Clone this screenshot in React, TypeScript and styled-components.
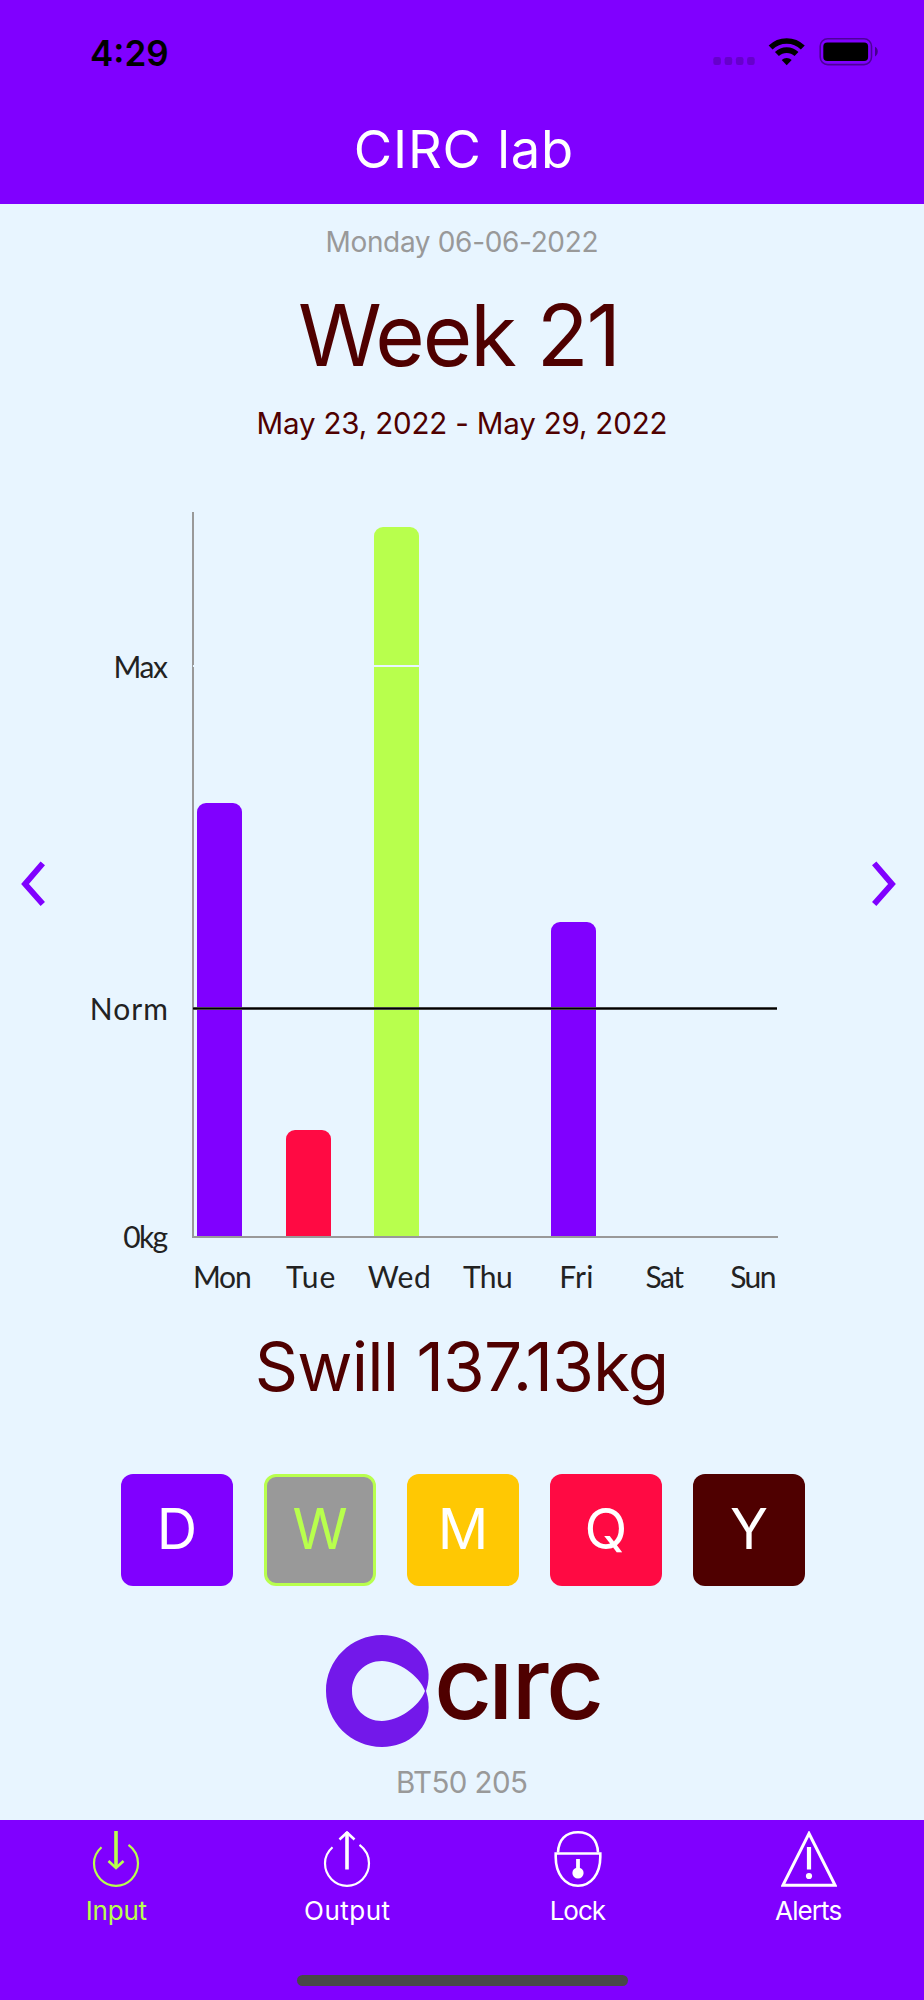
import React from 'react';
import styled, { createGlobalStyle, css } from 'styled-components';

const color = {
  violet: '#8000ff',
  sky: '#e8f5ff',
  maroon: '#4f0000',
  lime: '#b8ff4d',
  red: '#ff0a43',
  amber: '#ffc803',
  gray: '#999999',
  ink: '#222222',
};

const GlobalStyle = createGlobalStyle`
  *, *::before, *::after { box-sizing: border-box; }
  body { margin: 0; background: ${color.violet}; }
  button { border: 0; padding: 0; background: none; font: inherit; color: inherit; }
`;

/* Letter spacing whose trailing gap is taken back, so centred text stays centred. */
const tracked = css<{ $track?: number }>`
  letter-spacing: ${({ $track = 0 }) => $track}px;
  margin-right: ${({ $track = 0 }) => -$track}px;
`;

const Screen = styled.div`
  width: 924px;
  height: 2000px;
  display: flex;
  flex-direction: column;
  background: ${color.sky};
  font-family: Inter, 'Liberation Sans', sans-serif;
  overflow: hidden;
`;

const Header = styled.header`
  height: 204px;
  flex: none;
  background: ${color.violet};
`;

const StatusBar = styled.div`
  height: 104px;
  display: flex;
  align-items: center;
  justify-content: space-between;
  padding: 0 46px 0 90px;
`;

const Clock = styled.span`
  padding-top: 1px;
  font-size: 35px;
  font-weight: 600;
  line-height: 40px;
  color: #000;
  ${tracked}
`;

const Title = styled.h1`
  margin: 0;
  height: 91px;
  line-height: 91px;
  padding-left: 3px;
  font-size: 52.5px;
  font-weight: 400;
  text-align: center;
  color: #fff;
`;

const Tracked = styled.span<{ $track?: number }>`
  display: inline-block;
  white-space: nowrap;
  ${tracked}
`;

const Main = styled.main`
  height: 1616px;
  flex: none;
  display: flex;
  flex-direction: column;
  align-items: center;
  text-align: center;
`;

const Today = styled.p`
  margin: 18px 0 0;
  font-size: 28px;
  line-height: 40px;
  color: ${color.gray};
`;

const WeekTitle = styled.h2`
  margin: 24px 0 0;
  padding-right: 5px;
  font-size: 85px;
  font-weight: 400;
  line-height: 100px;
  color: ${color.maroon};
`;

const Range = styled.p`
  margin: 17px 0 0;
  font-size: 29.5px;
  line-height: 40px;
  color: ${color.maroon};
`;

const Carousel = styled.section`
  margin-top: 69px;
  width: 100%;
  display: grid;
  grid-template-columns: 65px 103px 24px 586px 1fr 65px;
  grid-template-rows: 744px 40px;
  font-family: Lato, 'Open Sans', sans-serif;
`;

const Arrow = styled.button<{ $side: 'left' | 'right' }>`
  grid-row: 1;
  grid-column: ${({ $side }) => ($side === 'left' ? 1 : 6)};
  padding-right: ${({ $side }) => ($side === 'left' ? 0 : 16)}px;
  display: grid;
  place-items: center;
  svg { display: block; transform: ${({ $side }) => ($side === 'left' ? 'none' : 'scaleX(-1)')}; }
`;

const AxisLabels = styled.div`
  grid-row: 1;
  grid-column: 2;
  padding-top: 134px;
  display: flex;
  flex-direction: column;
  align-items: flex-end;
`;

const AxisLabel = styled.span<{ $gap: number; $track: number }>`
  margin-bottom: ${({ $gap }) => $gap}px;
  font-size: 30px;
  line-height: 40px;
  color: ${color.ink};
  ${tracked}
`;

const Plot = styled.div`
  grid-row: 1;
  grid-column: 4;
  position: relative;
  height: 726px;
  display: flex;
  align-items: flex-end;
  gap: 43.5px;
  padding-left: 3px;
  border-left: 2px solid ${color.gray};
  border-bottom: 2px solid ${color.gray};
`;

const Bar = styled.div<{ $fill: string }>`
  flex: none;
  width: 45px;
  border-radius: 9px 9px 0 0;
  background: ${({ $fill }) => $fill};
`;

const RefLine = styled.div<{ $top: number; $size: number; $fill: string }>`
  position: absolute;
  left: -1px;
  right: 1px;
  top: ${({ $top }) => $top}px;
  height: ${({ $size }) => $size}px;
  background: ${({ $fill }) => $fill};
`;

const Days = styled.div`
  grid-row: 2;
  grid-column: 3 / 6;
  margin-left: 10px;
  display: grid;
  grid-template-columns: repeat(7, 88.5px);
  font-size: 30px;
  line-height: 40px;
  color: ${color.ink};
`;

const Total = styled.p`
  margin: 31px 0 0;
  font-size: 67.5px;
  line-height: 80px;
  color: ${color.maroon};
`;

const Periods = styled.div`
  margin-top: 67px;
  padding-left: 2px;
  display: flex;
  gap: 31px;
`;

const Period = styled.button<{ $fill: string; $active?: boolean }>`
  width: 112px;
  height: 112px;
  border-radius: 12px;
  border: ${({ $active }) => ($active ? 3 : 0)}px solid ${color.lime};
  background: ${({ $fill }) => $fill};
  color: ${({ $active }) => ($active ? color.lime : '#fff')};
  display: grid;
  place-items: center;
  font-size: 56px;
  line-height: 68px;
  padding-bottom: 2px;
`;

const Logo = styled.svg`
  display: block;
  margin: 49px 0 0 2px;
  overflow: visible;
`;

const Serial = styled.p`
  margin: 15px 0 0;
  font-size: 29.5px;
  line-height: 40px;
  color: ${color.gray};
`;

const Footer = styled.footer`
  flex: 1;
  display: flex;
  flex-direction: column;
  align-items: center;
  background: ${color.violet};
`;

const Tabs = styled.nav`
  width: 100%;
  height: 155px;
  display: grid;
  grid-template-columns: repeat(4, 1fr);
  padding: 11px 0 0 1px;
`;

const Tab = styled.button<{ $active?: boolean }>`
  display: flex;
  flex-direction: column;
  align-items: center;
  gap: 6px;
  font-size: 26px;
  line-height: 36px;
  color: ${({ $active }) => ($active ? color.lime : '#fff')};
`;

const HomeIndicator = styled.div`
  width: 331px;
  height: 11px;
  border-radius: 6px;
  background: #484848;
`;

const StatusIcons = () => (
  <svg width="166" height="30" viewBox="712 37 166 30">
    {[713.3, 724.6, 735.9, 747.1].map((x) => (
      <rect key={x} x={x} y="57" width="7.6" height="8" rx="2.2" fill="#000" opacity=".2" />
    ))}
    <g fill="none" stroke="#000" strokeWidth="5.6">
      <path d="M770.6 47.6a23 23 0 0 1 32.2 0" />
      <path d="M776.9 54.1a14 14 0 0 1 19.6 0" />
    </g>
    <path d="M786.7 65.2l-5-5.2a7.2 7.2 0 0 1 10 0z" fill="#000" />
    <rect x="820.2" y="38.8" width="51.3" height="25.8" rx="7.5" fill="none" stroke="#000" strokeOpacity=".4" strokeWidth="1.6" />
    <rect x="823.3" y="42.6" width="44.8" height="18.4" rx="4" fill="#000" />
    <path d="M875 46.8c3.7 1.6 3.7 8 0 9.6z" fill="#000" opacity=".45" />
  </svg>
);

const Chevron = () => (
  <svg width="26" height="48" viewBox="0 0 26 48" fill="none" stroke={color.violet} strokeWidth="5.8">
    <path d="M22.8 3.4L5 24L22.8 44" />
  </svg>
);

const CircLogo = () => (
  <Logo width="274" height="112" viewBox="326 1635 274 112">
    <path
      fillRule="evenodd"
      fill="#7318ea"
      d="M382 1635C351 1635 326 1660 326 1691S351 1747 382 1747C409 1747 431 1727 428.5 1703Q428 1697 426 1691Q428 1685 428.5 1679C431 1655 409 1635 382 1635ZM382 1661C398 1661 419 1675 425 1691C419 1707 398 1721 382 1721C365 1721 352 1708 352 1691S365 1661 382 1661Z"
    />
    <text x="434 488 511.5 546" y="1718.5" fontSize="101" fontWeight="500" fill={color.maroon} fontFamily="Inter, sans-serif">
      cırc
    </text>
  </Logo>
);

const PowerRing = () => (
  <path d="M9 17C4 21.500 1.500 27 1.500 33A22 22.500 0 0 0 45.500 33C45.500 26 42 19 36 14.500" transform="translate(4.500 -.7)" />
);

const InputIcon = () => (
  <svg width="56" height="56" viewBox="0 0 56 56" fill="none" stroke="currentColor" strokeWidth="2.2">
    <PowerRing />
    <path d="M28 0V37" strokeWidth="3.6" />
    <path d="M20.500 30L28 37L35.500 30" strokeWidth="2.6" />
  </svg>
);

const OutputIcon = () => (
  <svg width="56" height="56" viewBox="0 0 56 56" fill="none" stroke="currentColor" strokeWidth="2.2">
    <PowerRing />
    <path d="M28 1V38.500" strokeWidth="3.6" />
    <path d="M20.500 8.500L28 1.500L35.500 8.500" strokeWidth="2.6" />
  </svg>
);

const LockIcon = () => (
  <svg width="56" height="56" viewBox="0 0 56 56" fill="none" stroke="currentColor" strokeWidth="2.6">
    <path d="M8 21.500C8.500 9 15.500 1.300 28 1.300S47.500 9 48 21.500" />
    <path d="M5.700 22.500H50.300V26C50.300 43 41 54.700 28 54.700S5.700 43 5.700 26Z" />
    <path d="M28 28V42" strokeWidth="3.8" />
    <circle cx="28" cy="42" r="5.6" fill="currentColor" stroke="none" />
  </svg>
);

const AlertIcon = () => (
  <svg width="56" height="56" viewBox="0 0 56 56" fill="none" stroke="currentColor" strokeWidth="3">
    <path d="M28 2.500L54 54.200H2Z" />
    <path d="M28 16V38.500" strokeWidth="4.2" />
    <circle cx="28" cy="45" r="3.100" fill="currentColor" stroke="none" />
  </svg>
);

const axis = [
  { label: 'Max', gap: 302, track: -1.4 },
  { label: 'Norm', gap: 188, track: 1.1 },
  { label: '0kg', gap: 0, track: -1.8 },
];

const days = [
  { label: 'Mon', height: 433, fill: color.violet, track: -1.2 },
  { label: 'Tue', height: 106, fill: color.red, track: 1.1 },
  { label: 'Wed', height: 709, fill: color.lime, track: 0.6 },
  { label: 'Thu', height: 0, fill: color.lime, track: -0.6 },
  { label: 'Fri', height: 314, fill: color.violet, track: 0.2 },
  { label: 'Sat', height: 0, fill: color.lime, track: -1.4 },
  { label: 'Sun', height: 0, fill: color.lime, track: -1.6 },
];

const periods = [
  { label: 'D', fill: color.violet },
  { label: 'W', fill: color.gray, active: true },
  { label: 'M', fill: color.amber },
  { label: 'Q', fill: color.red },
  { label: 'Y', fill: color.maroon },
];

const tabs = [
  { label: 'Input', Icon: InputIcon, track: -0.16, active: true },
  { label: 'Output', Icon: OutputIcon, track: 0.49 },
  { label: 'Lock', Icon: LockIcon, track: -1 },
  { label: 'Alerts', Icon: AlertIcon, track: -0.9 },
];

export default function App() {
  return (
    <Screen>
      <GlobalStyle />
      <Header>
        <StatusBar>
          <Clock $track={0}>4:29</Clock>
          <StatusIcons />
        </StatusBar>
        <Title><Tracked $track={0.8}>CIRC lab</Tracked></Title>
      </Header>
      <Main>
        <Today><Tracked $track={-0.34}>Monday 06-06-2022</Tracked></Today>
        <WeekTitle><Tracked $track={-2.07}>Week 21</Tracked></WeekTitle>
        <Range><Tracked $track={-0.17}>May 23, 2022 - May 29, 2022</Tracked></Range>
        <Carousel>
          <Arrow $side="left" aria-label="Previous week"><Chevron /></Arrow>
          <AxisLabels>
            {axis.map(({ label, gap, track }) => (
              <AxisLabel key={label} $gap={gap} $track={track}>{label}</AxisLabel>
            ))}
          </AxisLabels>
          <Plot>
            {days.map(({ label, height, fill }) => (
              <Bar key={label} $fill={fill} style={{ height }} />
            ))}
            <RefLine $top={153} $size={2} $fill={color.sky} />
            <RefLine $top={495} $size={3} $fill="linear-gradient(#444 1px, #000 1px, #000 2px, #444 2px)" />
          </Plot>
          <Arrow $side="right" aria-label="Next week"><Chevron /></Arrow>
          <Days>
            {days.map(({ label, track }) => (
              <div key={label}><Tracked $track={track}>{label}</Tracked></div>
            ))}
          </Days>
        </Carousel>
        <Total><Tracked $track={-0.83}>Swill 137.13kg</Tracked></Total>
        <Periods>
          {periods.map(({ label, fill, active }) => (
            <Period key={label} $fill={fill} $active={active}>{label}</Period>
          ))}
        </Periods>
        <CircLogo />
        <Serial><Tracked $track={-0.59}>BT50 205</Tracked></Serial>
      </Main>
      <Footer>
        <Tabs>
          {tabs.map(({ label, Icon, track, active }) => (
            <Tab key={label} $active={active}>
              <Icon />
              <Tracked $track={track}>{label}</Tracked>
            </Tab>
          ))}
        </Tabs>
        <HomeIndicator />
      </Footer>
    </Screen>
  );
}
